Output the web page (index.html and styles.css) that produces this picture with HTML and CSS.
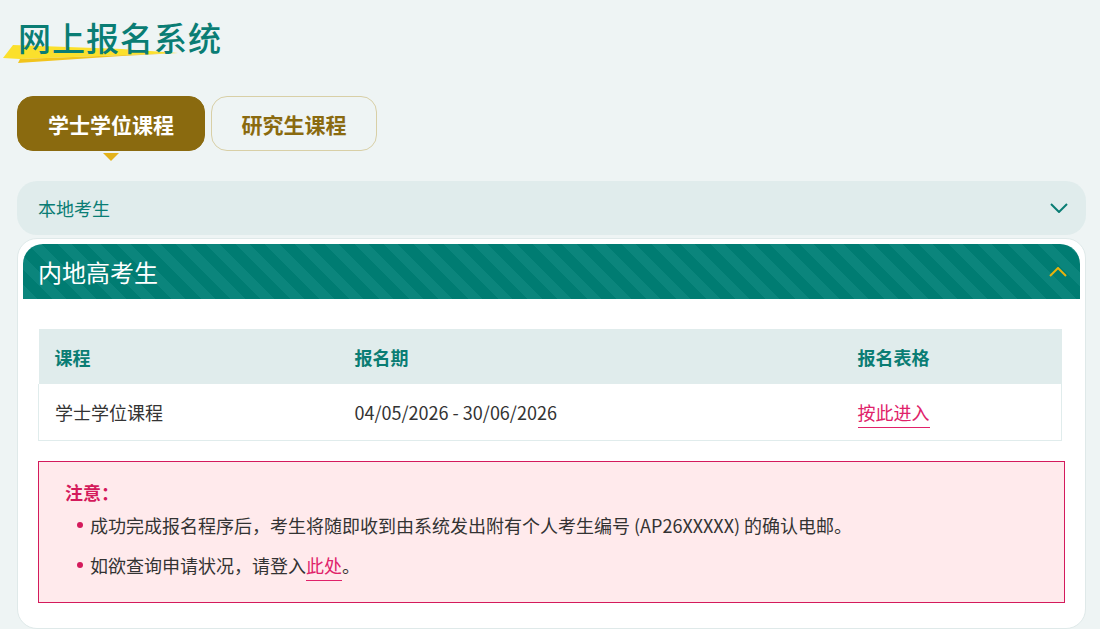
FILE: index.html
```html
<!DOCTYPE html>
<html lang="zh-CN">
<head>
    <meta charset="UTF-8">
    <meta name="viewport" content="width=device-width, initial-scale=1.0">
    <title>网上报名系统</title>
    <link rel="stylesheet" href="styles.css">
</head>
<body>

<div class="page">

    <div class="page-title">
        <svg class="title-brush" width="180" height="22" viewBox="0 0 180 22">
            <polygon points="1,14 11,1 120,5 176,9 18,15" fill="#fbe02c"/>
            <polygon points="18,15 176,9 120,12 16,19" fill="#f2c41c"/>
        </svg>
        <h1>网上报名系统</h1>
    </div>

    <div class="tabs">
        <button class="tab active">学士学位课程</button>
        <button class="tab">研究生课程</button>
    </div>

    <div class="panel-closed">
        <span>本地考生</span>
        <svg width="18" height="10" viewBox="0 0 18 10"><polyline points="1,1 9,9 17,1" fill="none" stroke="#0a7d74" stroke-width="2"/></svg>
    </div>

    <div class="panel-open">
        <div class="panel-head">
            <h2>内地高考生</h2>
            <svg width="18" height="10" viewBox="0 0 18 10"><polyline points="1,9 9,1 17,9" fill="none" stroke="#e9b30c" stroke-width="2"/></svg>
        </div>

        <div class="panel-body">
            <table class="course-table">
                <thead>
                    <tr>
                        <th class="col-course">课程</th>
                        <th class="col-period">报名期</th>
                        <th>报名表格</th>
                    </tr>
                </thead>
                <tbody>
                    <tr>
                        <td>学士学位课程</td>
                        <td>04/05/2026 - 30/06/2026</td>
                        <td><a href="#" class="pink-link">按此进入</a></td>
                    </tr>
                </tbody>
            </table>

            <div class="notice">
                <div class="notice-title">注意：</div>
                <ul>
                    <li>成功完成报名程序后，考生将随即收到由系统发出附有个人考生编号 (AP26XXXXX) 的确认电邮。</li>
                    <li>如欲查询申请状况，请登入<a href="#" class="pink-link">此处</a>。</li>
                </ul>
            </div>
        </div>
    </div>

</div>

</body>
</html>
```

FILE: styles.css
```css
* {
    box-sizing: border-box;
}

body {
    margin: 0;
    background-color: #eef4f4;
    font-family: "Noto Sans CJK SC", "Noto Sans", sans-serif;
    color: #333;
    font-size: 18px;
}

.page {
    padding: 0 14px 0 17px;
}

/* タイトル */
.page-title {
    position: relative;
    padding-top: 16px;
}
.page-title h1 {
    position: relative;
    margin: 0;
    padding-left: 1px;
    font-size: 33px;
    line-height: 42px;
    font-weight: 500;
    color: #0a7d74;
    letter-spacing: 1px;
}
.title-brush {
    position: absolute;
    left: -15px;
    top: 44px;
}

/* タブ */
.tabs {
    display: flex;
    gap: 6px;
    margin-top: 38px;
    margin-bottom: 30px;
}
.tab {
    height: 55px;
    padding: 0;
    border-radius: 16px;
    border: 1px solid #d8cfa6;
    background-color: transparent;
    color: #8a6a0f;
    font-family: inherit;
    font-size: 21px;
    font-weight: bold;
    cursor: pointer;
}
.tab.active {
    position: relative;
    width: 188px;
    background-color: #8a6a0f;
    border-color: #8a6a0f;
    color: white;
}
.tab.active::after {
    content: "";
    position: absolute;
    left: 50%;
    bottom: -11px;
    margin-left: -8px;
    border-left: 8px solid transparent;
    border-right: 8px solid transparent;
    border-top: 8px solid #e3b21b;
}
.tab:not(.active) {
    width: 166px;
}

/* 閉じたパネル */
.panel-closed {
    display: flex;
    align-items: center;
    justify-content: space-between;
    height: 54px;
    padding: 0 18px 0 21px;
    background-color: #e0ecec;
    border-radius: 20px;
    color: #0a7d74;
}

/* 開いたパネル */
.panel-open {
    margin-top: 3px;
    padding: 5px 5px 0;
    background-color: white;
    border: 1px solid #dfe9e9;
    border-radius: 20px;
}
.panel-head {
    display: flex;
    align-items: center;
    justify-content: space-between;
    height: 55px;
    padding: 0 13px 0 15px;
    border-radius: 20px 20px 0 0;
    background-color: #007c72;
    background-image: repeating-linear-gradient(45deg, #0b857c 0, #0b857c 10px, #007c72 10px, #007c72 21px);
}
.panel-head h2 {
    margin: 0;
    font-size: 24px;
    font-weight: normal;
    color: white;
}
.panel-body {
    padding: 30px 15px 25px;
}

/* 表 */
.course-table {
    width: calc(100% - 3px);
    border-collapse: collapse;
}
.course-table th {
    height: 55px;
    padding: 0 16px;
    text-align: left;
    background-color: #e0ecec;
    color: #0a7d74;
    font-weight: bold;
}
.course-table td {
    height: 56px;
    padding: 0 16px;
    border: 1px solid #e0ecec;
    border-top: none;
}
.course-table td:first-child { border-right: none; }
.course-table td:nth-child(2) { border-left: none; border-right: none; }
.course-table td:last-child { border-left: none; }
.col-course { width: 300px; }
.col-period { width: 503px; }

.pink-link {
    color: #e0226a;
    text-decoration: none;
    border-bottom: 1px solid #e0226a;
    padding-bottom: 2px;
}

/* 注意 */
.notice {
    margin-top: 20px;
    padding: 18px 26px 17px;
    background-color: #ffeaec;
    border: 1px solid #d41a5c;
}
.notice-title {
    line-height: 24px;
    color: #d41a5c;
    font-weight: bold;
}
.notice ul {
    margin: 1px 0 0;
    padding: 0 0 0 12px;
    list-style: none;
}
.notice li {
    position: relative;
    line-height: 40px;
    padding-left: 13px;
}
.notice li::before {
    content: "";
    position: absolute;
    left: 0;
    top: 17px;
    width: 6px;
    height: 6px;
    border-radius: 50%;
    background-color: #d41a5c;
}
```
